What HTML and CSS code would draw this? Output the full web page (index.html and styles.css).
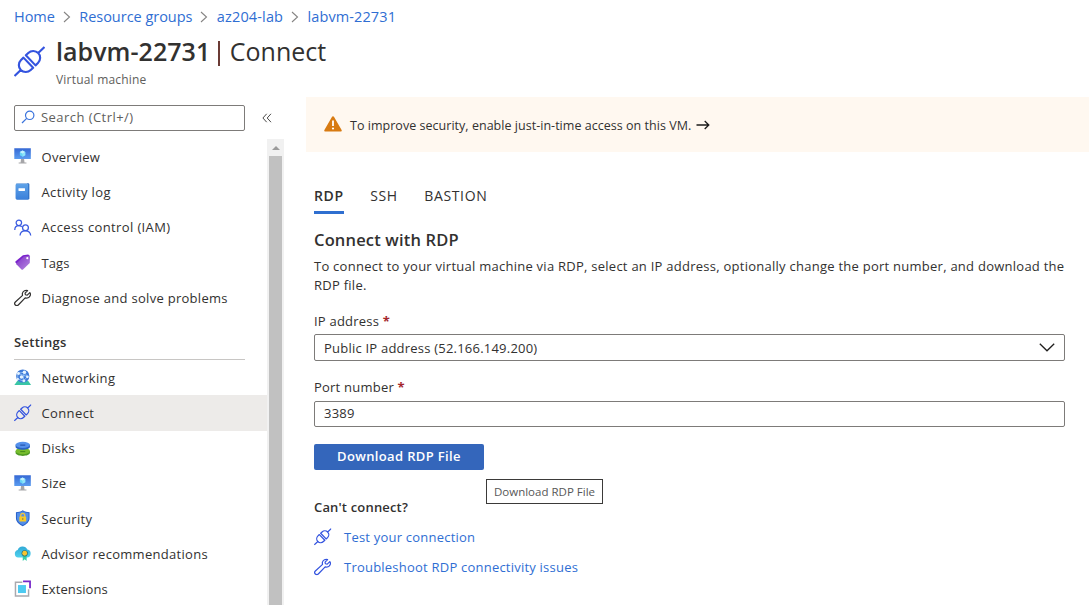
FILE: index.html
```html
<!DOCTYPE html>
<html lang="en">
<head>
<meta charset="utf-8">
<title>labvm-22731 | Connect</title>
<link rel="stylesheet" href="styles.css">
</head>
<body>
<svg class="symbols" aria-hidden="true">
  <defs>
    <linearGradient id="g-blue" x1="0" y1="0" x2="0" y2="1"><stop offset="0" stop-color="#3568d4"/><stop offset="1" stop-color="#5b9df0"/></linearGradient>
    <linearGradient id="g-book" x1="0" y1="0" x2="0" y2="1"><stop offset="0" stop-color="#5ea2e8"/><stop offset="1" stop-color="#3b80da"/></linearGradient>
    <linearGradient id="g-tag" x1="0" y1="0" x2="1" y2="1"><stop offset="0.2" stop-color="#8a40cc"/><stop offset="1" stop-color="#b78be0"/></linearGradient>
    <linearGradient id="g-cloud" x1="0" y1="0" x2="0" y2="1"><stop offset="0" stop-color="#31a9d6"/><stop offset="1" stop-color="#4fd2ee"/></linearGradient>
  </defs>
  <symbol id="plug" viewBox="0 0 32 32">
    <g transform="translate(16 16) rotate(-44)" fill="none" stroke="currentColor" stroke-linejoin="round">
      <path d="M-21.5 0H-12.5M12.5 0H21.5M-1.7-7.2H-5.2A7.3 7.2 0 0 0-5.2 7.2H-1.7ZM1.7-7.2H5.2A7.3 7.2 0 0 1 5.2 7.2H1.7Z"/>
    </g>
  </symbol>
  <symbol id="wrench" viewBox="0 0 18 18">
    <path d="M16.3 3.7 13.6 6.3 11.7 5.9 11.4 4.2 14 1.6C11.8.8 9.3 2 8.7 4.3 8.5 5.1 8.6 5.8 8.8 6.5L1.4 13.4A2 2 0 0 0 4.4 16.5L11.5 9.1C13.5 9.8 15.9 8.8 16.7 6.7 17.1 5.6 17 4.6 16.3 3.7Z" fill="none" stroke="currentColor" stroke-width="1.25" stroke-linejoin="round"/>
  </symbol>
  <symbol id="monitor" viewBox="0 0 18 18">
    <path d="M.3 .2H17.3V11.4H.3Z" fill="url(#g-blue)"/>
    <path d="M7.2 11.4H10.4L10.8 14.8H12.8V16H4.8V14.8H6.8Z" fill="#a5a5a8"/>
    <path d="M8.8 2.6 11.6 4.1V7.5L8.8 9.1 6 7.5V4.1Z" fill="#66d5f6"/>
    <path d="M8.8 2.6 11.6 4.1 8.8 5.8 6 4.1Z" fill="#c5f1fc"/><path d="M8.8 5.8 11.6 4.1V7.5L8.8 9.1Z" fill="#91e4fa"/>
  </symbol>
</svg>

<header class="page-head">
  <nav class="crumbs">
    <a>Home</a><svg class="sep" viewBox="0 0 8 12"><path d="M1 1 6.5 6 1 11"/></svg>
    <a>Resource groups</a><svg class="sep" viewBox="0 0 8 12"><path d="M1 1 6.5 6 1 11"/></svg>
    <a class="crumb-lab">az204-lab</a><svg class="sep" viewBox="0 0 8 12"><path d="M1 1 6.5 6 1 11"/></svg>
    <a class="crumb-vm">labvm-22731</a>
  </nav>
  <div class="title-row">
    <svg class="title-icon"><use href="#plug"/></svg>
    <div>
      <h1><span class="vm-name">labvm-22731</span><span class="bar"></span><span class="blade">Connect</span></h1>
      <p class="kind">Virtual machine</p>
    </div>
  </div>
</header>

<div class="body">
  <aside class="side">
    <div class="search-row">
      <div class="search">
        <svg class="glass" viewBox="0 0 14 14"><circle cx="8.7" cy="5.3" r="4.2"/><path d="M5.7 8.3 1 13"/></svg>
        <span>Search (Ctrl+/)</span>
      </div>
      <svg class="collapse" viewBox="0 0 10 10"><path d="M4.7.8.9 5 4.7 9.2M9 .8 5.2 5 9 9.2"/></svg>
    </div>
    <div class="menu-wrap">
      <nav class="menu">
        <a class="item"><svg class="ico"><use href="#monitor"/></svg><span>Overview</span></a>
        <a class="item"><svg class="ico" viewBox="0 0 18 18"><rect x="2.2" y=".3" width="13.6" height="16.6" rx="1.2" fill="#2e6fc4"/><path d="M3 .5H13.5V14.7H3Z" fill="#cfe4fa"/><path d="M1.6 2.1Q1.6 1.1 2.8 1.1H14.6V16.9H2.8Q1.6 16.9 1.6 15.5Z" fill="url(#g-book)"/><rect x="4.6" y="5.3" width="6.7" height="2.8" rx=".4" fill="#fff"/></svg><span class="wide">Activity log</span></a>
        <a class="item"><svg class="ico" viewBox="0 0 18 18"><g fill="none" stroke="#3a5be0" stroke-width="1.3"><circle cx="5" cy="3.9" r="2.8"/><path d="M.8 11.4C.8 8.7 2.6 6.9 5 6.9 6.3 6.9 7.2 7.3 8 8"/><circle cx="11.8" cy="9" r="3"/><path d="M6.2 17C6.4 13.9 8.6 12.1 11.6 12.1S16.9 13.9 17.2 17"/></g></svg><span class="wide">Access control (IAM)</span></a>
        <a class="item"><svg class="ico" viewBox="0 0 18 18"><path d="M1.4 7.8 9.2 1.2 14.6 .6 16.2 1.8 8.2 14.8 1.4 8.8Z" fill="#7a22cc"/><path d="M2.6 9.4 10 2.5 15.6 1.7Q16.4 1.7 16.5 2.6L16.2 9.2 9 16.1Q8.3 16.6 7.7 16L2.5 10.6Q2 10 2.6 9.4Z" fill="url(#g-tag)"/><circle cx="13.7" cy="4.3" r="1.1" fill="#fff"/></svg><span class="tight">Tags</span></a>
        <a class="item dark"><svg class="ico"><use href="#wrench"/></svg><span>Diagnose and solve problems</span></a>
        <h2 class="group">Settings</h2>
        <a class="item"><svg class="ico" viewBox="0 0 18 18"><path d="M3.5 12H14.5L17.6 16.4H.4Z" fill="#39c5a5"/><circle cx="9" cy="7.2" r="6.8" fill="#3d79d8"/><path d="M4 4.5 10.5 3.2 14 8 9.3 12.5 3.8 10ZM10.5 3.2 9.3 12.5M4 4.5 14 8" fill="none" stroke="#a8d2fa" stroke-width=".7"/><g fill="#e4f3ff"><circle cx="4.6" cy="4.7" r="1.5"/><circle cx="10.7" cy="3.3" r="1.8"/><circle cx="13.8" cy="8" r="1.4"/><circle cx="7.7" cy="8.2" r="1.8"/><circle cx="10.2" cy="12.2" r="1.5"/><circle cx="4" cy="10.4" r="1.1"/></g></svg><span class="wide">Networking</span></a>
        <a class="item active"><svg class="ico plug-small"><use href="#plug"/></svg><span class="wide">Connect</span></a>
        <a class="item"><svg class="ico" viewBox="0 0 18 18"><path d="M1.6 11.3V13.2C1.6 17.4 16.4 17.4 16.4 13.2V11.3Z" fill="#4f9a24"/><ellipse cx="9" cy="11.3" rx="7.4" ry="3.3" fill="#76bc2d"/><path d="M1.6 5V7C1.6 11.1 16.4 11.1 16.4 7V5Z" fill="#2a63c4"/><ellipse cx="9" cy="5" rx="7.4" ry="3.2" fill="#5490eb"/><path d="M6.4 4.7H11.6V5.8H6.4Z" fill="#1f4da5"/><path d="M6.4 11.5H11.6V12.4H6.4Z" fill="#3e8417"/></svg><span>Disks</span></a>
        <a class="item"><svg class="ico"><use href="#monitor"/></svg><span>Size</span></a>
        <a class="item"><svg class="ico" viewBox="0 0 18 18"><path d="M9 .2C11.2 1.8 13.6 2 16 2.2V8.2C16 12.2 12.8 14.8 9 16.6 5.2 14.8 2 12.2 2 8.2V2.2C4.4 2 6.8 1.8 9 .2Z" fill="#2860ca"/><path d="M9 1.4C11.2 2.8 13 3 15 3.2V8.2C15 11.5 12.4 13.8 9 15.4 5.6 13.8 3 11.5 3 8.2V3.2C5 3 6.8 2.8 9 1.4Z" fill="#538fe8"/><path d="M6.9 7.4V5.6A2.1 2.2 0 0 1 11.1 5.6V7.4" fill="none" stroke="#efc53b" stroke-width="1.3"/><rect x="5.5" y="6.7" width="7" height="5" rx=".6" fill="#f7ca27"/><path d="M8.4 8.2H9.6V10.2H8.4Z" fill="#9e8e3c"/></svg><span>Security</span></a>
        <a class="item"><svg class="ico" viewBox="0 0 18 18"><path d="M4.2 12.9A4 4 0 0 1 3.8 5.1 5.3 5.3 0 0 1 13.7 4.6 4.2 4.2 0 0 1 13.4 12.9Z" fill="url(#g-cloud)"/><path d="M9 10H13V16.5L11 14.7 9 16.5Z" fill="#36cda8"/><circle cx="11" cy="8.5" r="3.2" fill="#276e79"/><circle cx="11" cy="8.5" r="2.5" fill="#f7c52e"/></svg><span>Advisor recommendations</span></a>
        <a class="item"><svg class="ico" viewBox="0 0 18 18"><path d="M8.6 2.4H1.5V16.5H15V9.5" fill="none" stroke="#a9a9ae" stroke-width="1.5"/><path d="M9.3 1.3H16.5V8.5" fill="none" stroke="#7626c9" stroke-width="1.8"/><rect x="4.1" y="5.2" width="8.2" height="8.2" fill="#4dcaf1"/></svg><span class="tight">Extensions</span></a>
      </nav>
      <div class="scroll"><svg class="up" viewBox="0 0 8 4"><path d="M0 4 4 0 8 4Z"/></svg><div class="thumb"></div></div>
    </div>
  </aside>

  <main class="main">
    <div class="notice">
      <svg class="warn" viewBox="0 0 18 16"><path d="M9 .3Q9.7.3 10.1 1L17.6 14Q18.1 15.2 17 15.4H1Q-.1 15.2.4 14L7.9 1Q8.3.3 9 .3Z" fill="#d87b12"/><path d="M9 4.6V10" stroke="#fff" stroke-width="1.8"/><circle cx="9" cy="12.5" r="1.1" fill="#fff"/></svg>
      <span class="notice-text">To improve security, enable just-in-time access on this VM.</span>
      <svg class="arrow" viewBox="0 0 14 10"><path d="M.5 5H12.8M8.7 1 12.8 5 8.7 9"/></svg>
    </div>
    <section class="content">
      <div class="tabs"><a class="tab on">RDP</a><a class="tab">SSH</a><a class="tab">BASTION</a></div>
      <h2 class="section-title">Connect with RDP</h2>
      <p class="intro">To connect to your virtual machine via RDP, select an IP address, optionally change the port number, and download the<br>RDP file.</p>
      <label class="label">IP address <b>*</b></label>
      <div class="field select"><span>Public IP address (52.166.149.200)</span><svg class="chev" viewBox="0 0 16 9"><path d="M.8.8 8 7.8 15.2.8"/></svg></div>
      <label class="label port-label">Port number <b>*</b></label>
      <div class="field port">3389</div>
      <div class="action">
        <button class="primary">Download RDP File</button>
        <div class="tip">Download RDP File</div>
      </div>
      <h3 class="help">Can't connect?</h3>
      <a class="link"><svg class="ico plug-small"><use href="#plug"/></svg><span>Test your connection</span></a>
      <a class="link"><svg class="ico"><use href="#wrench"/></svg><span>Troubleshoot RDP connectivity issues</span></a>
    </section>
  </main>
</div>
</body>
</html>
```
FILE: styles.css
```css
* { box-sizing: border-box; }
body { margin: 0; width: 1089px; height: 605px; overflow: hidden; background: #fff; color: #323130; font: 13px/20px "Open Sans", "Noto Sans", sans-serif; display: flex; flex-direction: column; }
h1, h2, h3, p { margin: 0; font-weight: 400; }
svg { flex: none; display: block; }
.symbols { position: absolute; width: 0; height: 0; }

.page-head { height: 97px; padding: 6px 14px 0; flex: none; }
.crumbs { display: flex; align-items: center; height: 21px; font-size: 14.5px; letter-spacing: -.03px; color: #2f6ed3; white-space: nowrap; }
.crumb-lab { letter-spacing: .15px; }
.crumb-vm { letter-spacing: .1px; }
.sep { width: 8px; height: 12px; margin: 0 8.4px 0 8px; fill: none; stroke: #858483; stroke-width: 1.1; }
.title-row { display: flex; gap: 11px; padding-top: 7px; }
.title-icon { width: 31px; height: 31px; margin-top: 12px; color: #3454df; stroke-width: 2.2; }
h1 { display: flex; align-items: center; height: 34px; font-size: 25px; line-height: 34px; white-space: nowrap; }
.vm-name { font-weight: 600; letter-spacing: .05px; }
.bar { width: 1.5px; height: 25px; margin: 4px 10px 0 8px; background: #6b3b35; }
.kind { font-size: 12px; line-height: 18px; letter-spacing: .2px; color: #605e5c; margin-top: 3px; }

.body { flex: 1; display: flex; min-height: 0; }
.side { width: 284px; flex: none; display: flex; flex-direction: column; min-height: 0; }
.search-row { display: flex; align-items: center; height: 42px; padding-left: 14px; flex: none; }
.search { display: flex; align-items: center; gap: 6px; width: 231px; height: 26px; padding: 0 0 2px 6px; border: 1px solid #7d7b79; border-radius: 2px; color: #605e5c; letter-spacing: .45px; }
.glass { width: 14px; height: 14px; fill: none; stroke: #3a73dc; stroke-width: 1.2; }
.collapse { width: 10px; height: 10px; margin-left: 17px; fill: none; stroke: #4a4948; stroke-width: 1; }
.menu-wrap { flex: 1; display: flex; min-height: 0; }
.menu { width: 267px; overflow: hidden; padding-top: .4px; }
.item { display: flex; align-items: center; gap: 10px; height: 35.2px; padding-left: 14px; letter-spacing: .29px; white-space: nowrap; }
.wide { letter-spacing: .38px; }
.tight { letter-spacing: .1px; }
.item.active { background: #edebe9; margin: -.2px 0 .2px; padding-top: .4px; }
.ico { width: 17.5px; height: 17.5px; }
.plug-small { color: #3454df; stroke-width: 2.3; }
.dark { color: #323130; }
.group { height: 44.6px; margin: 0 22px .4px 14px; padding-top: 17px; border-bottom: 1px solid #c8c6c4; font-size: 13px; line-height: 20px; letter-spacing: .3px; font-weight: 600; }
.scroll { width: 17px; background: #f1f1f1; display: flex; flex-direction: column; align-items: center; }
.up { width: 8px; height: 4px; margin: 7px 0 6px; fill: #9b9b9b; }
.thumb { width: 13px; flex: 1; background: #c1c1c1; }

.main { flex: 1; padding-left: 22px; }
.notice { display: flex; align-items: center; height: 55px; padding: 1px 0 0 18px; background: #fff8f0; font-size: 12.5px; white-space: nowrap; }
.notice-text { letter-spacing: .03px; padding-top: 1px; }
.warn { width: 18px; height: 16px; margin: -3px 8px 0 0; }
.arrow { width: 14px; height: 10px; margin-left: 5px; fill: none; stroke: #1b1a19; stroke-width: 1.3; }
.content { padding: 32px 24px 0 8px; }
.tabs { display: flex; gap: 26.4px; height: 30px; font-size: 14px; line-height: 24px; letter-spacing: .65px; }
.tab { height: 30px; }
.tab.on { border-bottom: 3px solid #2f6fd0; font-weight: 600; }
.section-title { margin-top: 14px; font-size: 16.5px; line-height: 24px; letter-spacing: .17px; font-weight: 600; }
.intro { margin-top: 5px; line-height: 19px; letter-spacing: .255px; white-space: nowrap; }
.label { display: block; margin-top: 16px; height: 23px; line-height: 20px; letter-spacing: .22px; }
.label b { color: #a4262c; }
.field { display: flex; align-items: center; justify-content: space-between; height: 27px; padding: 0 9px; border: 1px solid #7d7b79; border-radius: 2px; letter-spacing: .22px; }
.chev { width: 16px; height: 9px; fill: none; stroke: #201f1e; stroke-width: 1.3; }
.port-label { height: 24px; }
.port { height: 26px; padding-bottom: 2px; }
.action { position: relative; margin-top: 17px; height: 26px; }
.primary { display: block; width: 170px; height: 26px; padding: 0 0 2px; border: 0; border-radius: 2px; background: #3466bb; color: #fff; font: 600 13px/20px "Open Sans", sans-serif; letter-spacing: .36px; }
.tip { position: absolute; left: 172px; top: 35px; width: 117px; height: 25px; border: 1px solid #3b3a39; background: #fff; font-size: 11.5px; line-height: 23px; text-align: center; color: #575757; white-space: nowrap; }
.help { margin: 27px 0 5px; font-size: 13px; line-height: 20px; letter-spacing: .17px; font-weight: 600; }
.link { display: flex; align-items: center; gap: 12.5px; height: 30px; color: #2f6ed3; letter-spacing: .22px; white-space: nowrap; }
.link .ico { color: #3454df; }
```
